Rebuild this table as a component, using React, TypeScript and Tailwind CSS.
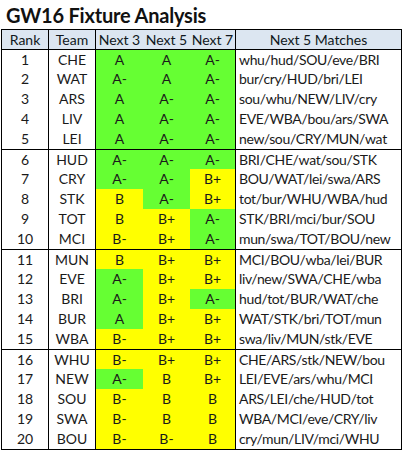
import React from "react";

type G = "g" | "y";
type Row = [number, string, string, G, string, G, string, G, string];

const rows: Row[] = [
  [1, "CHE", "A", "g", "A", "g", "A-", "g", "whu/hud/SOU/eve/BRI"],
  [2, "WAT", "A-", "g", "A", "g", "A-", "g", "bur/cry/HUD/bri/LEI"],
  [3, "ARS", "A", "g", "A-", "g", "A-", "g", "sou/whu/NEW/LIV/cry"],
  [4, "LIV", "A", "g", "A-", "g", "A-", "g", "EVE/WBA/bou/ars/SWA"],
  [5, "LEI", "A", "g", "A-", "g", "A-", "g", "new/sou/CRY/MUN/wat"],
  [6, "HUD", "A-", "g", "A-", "g", "A-", "g", "BRI/CHE/wat/sou/STK"],
  [7, "CRY", "A-", "g", "A-", "g", "B+", "y", "BOU/WAT/lei/swa/ARS"],
  [8, "STK", "B", "y", "A-", "g", "B+", "y", "tot/bur/WHU/WBA/hud"],
  [9, "TOT", "B", "y", "B+", "y", "A-", "g", "STK/BRI/mci/bur/SOU"],
  [10, "MCI", "B-", "y", "B+", "y", "A-", "g", "mun/swa/TOT/BOU/new"],
  [11, "MUN", "B", "y", "B+", "y", "B+", "y", "MCI/BOU/wba/lei/BUR"],
  [12, "EVE", "A-", "g", "B+", "y", "B+", "y", "liv/new/SWA/CHE/wba"],
  [13, "BRI", "A-", "g", "B+", "y", "A-", "g", "hud/tot/BUR/WAT/che"],
  [14, "BUR", "A", "g", "B+", "y", "B+", "y", "WAT/STK/bri/TOT/mun"],
  [15, "WBA", "B-", "y", "B+", "y", "B+", "y", "swa/liv/MUN/stk/EVE"],
  [16, "WHU", "B-", "y", "B+", "y", "B+", "y", "CHE/ARS/stk/NEW/bou"],
  [17, "NEW", "A-", "g", "B", "y", "B+", "y", "LEI/EVE/ars/whu/MCI"],
  [18, "SOU", "B-", "y", "B", "y", "B", "y", "ARS/LEI/che/HUD/tot"],
  [19, "SWA", "B-", "y", "B", "y", "B", "y", "WBA/MCI/eve/CRY/liv"],
  [20, "BOU", "B-", "y", "B-", "y", "B", "y", "cry/mun/LIV/mci/WHU"],
];

const bg = (c: G) => (c === "g" ? "bg-[#66ff33]" : "bg-[#ffff00]");

export default function App() {
  return (
    <div
      className="w-[410px] h-[458px] bg-white text-[#1a1a1a]"
      style={{ fontFamily: "Lato, 'Open Sans', sans-serif" }}
    >
      <div className="h-[29px] pl-[6px] pt-[3px] text-[20px] font-bold leading-[24px] tracking-[-0.2px] text-[#111]">
        GW16 Fixture Analysis
      </div>
      <div className="ml-[1px] w-[401px] border border-black text-[14px] leading-none">
        <div className="flex h-[19px] bg-[#dce6f1] text-[#101820]">
          <div className="w-[47px] border-r border-black flex items-center justify-center">Rank</div>
          <div className="w-[47px] border-r border-black flex items-center justify-center">Team</div>
          <div className="w-[47px] flex items-center justify-center">Next 3</div>
          <div className="w-[47px] flex items-center justify-center">Next 5</div>
          <div className="w-[46px] border-r border-black flex items-center justify-center">Next 7</div>
          <div className="flex-1 flex items-center justify-center">Next 5 Matches</div>
        </div>
        {rows.map((r, i) => (
          <div
            key={r[0]}
            className={`flex h-[20px] ${i % 5 === 0 ? "border-t border-black" : ""}`}
          >
            <div className="w-[47px] border-r border-black flex items-center justify-center">{r[0]}</div>
            <div className="w-[47px] border-r border-black flex items-center justify-center">{r[1]}</div>
            <div className={`w-[47px] flex items-center justify-center ${bg(r[3])}`}>{r[2]}</div>
            <div className={`w-[47px] flex items-center justify-center ${bg(r[5])}`}>{r[4]}</div>
            <div className={`w-[46px] border-r border-black flex items-center justify-center ${bg(r[7])}`}>{r[6]}</div>
            <div className="flex-1 flex items-center pl-[3px] tracking-[-0.35px]">{r[8]}</div>
          </div>
        ))}
      </div>
    </div>
  );
}
